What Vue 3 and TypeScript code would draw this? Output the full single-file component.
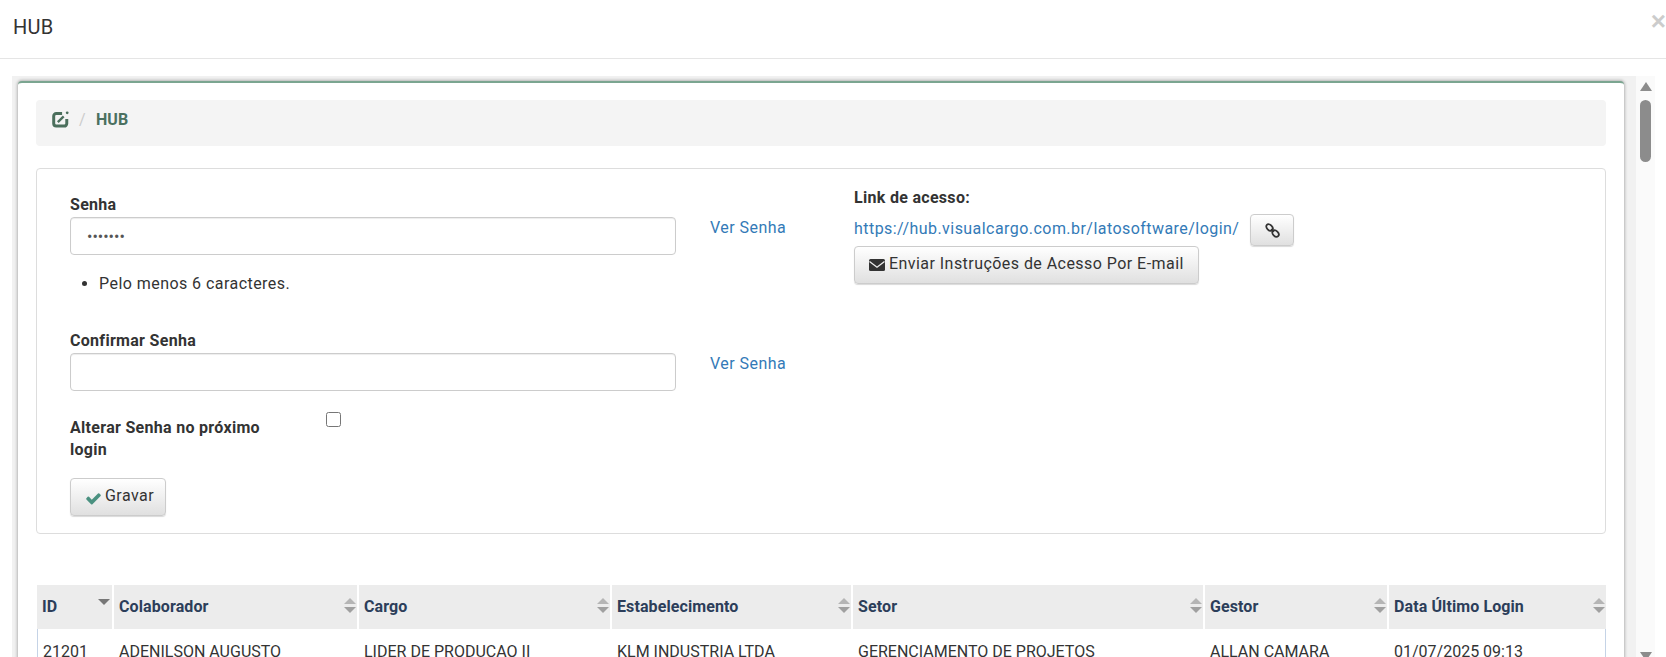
<script setup lang="ts">
const columns = [
  { name: 'ID', value: '21201', active: true },
  { name: 'Colaborador', value: 'ADENILSON AUGUSTO', active: false },
  { name: 'Cargo', value: 'LIDER DE PRODUCAO II', active: false },
  { name: 'Estabelecimento', value: 'KLM INDUSTRIA LTDA', active: false },
  { name: 'Setor', value: 'GERENCIAMENTO DE PROJETOS', active: false },
  { name: 'Gestor', value: 'ALLAN CAMARA', active: false },
  { name: 'Data Último Login', value: '01/07/2025 09:13', active: false },
]
</script>

<template>
  <div class="modal">
    <header class="modal-header">
      <h4 class="modal-title">HUB</h4>
      <span class="close">×</span>
    </header>
    <div class="modal-body">
      <div class="viewport">
        <div class="card">
          <nav class="breadcrumb">
            <svg class="edit-icon" viewBox="0 0 16 16" aria-hidden="true">
              <path fill="none" stroke="currentColor" stroke-width="2.800" d="M9.500 2.400H4a2.400 2.400 0 0 0-2.400 2.400v7A2.400 2.400 0 0 0 4 14.200h7.500a2.400 2.400 0 0 0 2.400-2.400V7.500" />
              <path fill="none" stroke="currentColor" stroke-width="2.200" d="M5.500 10.500L11 5" />
              <circle cx="14.300" cy="1.700" r="1.300" fill="currentColor" />
            </svg>
            <span class="slash">/</span>
            <span class="crumb">HUB</span>
          </nav>

          <section class="panel">
            <div class="form-col">
              <div class="field-row">
                <div class="field">
                  <label class="label">Senha</label>
                  <input class="input" type="password" value="1234567" />
                  <ul class="hints"><li>Pelo menos 6 caracteres.</li></ul>
                </div>
                <a class="link see">Ver Senha</a>
              </div>
              <div class="field-row second">
                <div class="field">
                  <label class="label">Confirmar Senha</label>
                  <input class="input" type="password" />
                </div>
                <a class="link see">Ver Senha</a>
              </div>
              <div class="check-row">
                <label class="label check-label">Alterar Senha no próximo login</label>
                <input class="check" type="checkbox" />
              </div>
              <button class="btn save" type="button">
                <svg class="check-icon" viewBox="0 0 1792 1792" aria-hidden="true"><path fill="currentColor" d="M1671 566q0 40-28 68l-724 724-136 136q-28 28-68 28t-68-28l-136-136-362-362q-28-28-28-68t28-68l136-136q28-28 68-28t68 28l294 295 656-657q28-28 68-28t68 28l136 136q28 28 28 68z"/></svg>
                Gravar
              </button>
            </div>
            <div class="access-col">
              <div class="label access-title">Link de acesso:</div>
              <div class="access-link">
                <a class="link">https://hub.visualcargo.com.br/latosoftware/login/</a>
                <button class="btn copy" type="button" aria-label="Copiar">
                  <svg class="link-icon" viewBox="0 0 16 16" aria-hidden="true">
                    <ellipse cx="4.800" cy="4.800" rx="4" ry="2.800" transform="rotate(45 4.800 4.800)" fill="none" stroke="currentColor" stroke-width="1.900" />
                    <ellipse cx="11.200" cy="11.200" rx="4" ry="2.800" transform="rotate(45 11.200 11.200)" fill="none" stroke="currentColor" stroke-width="1.900" />
                    <path d="M6.500 6.500L9.500 9.500" stroke="currentColor" stroke-width="1.900" />
                  </svg>
                </button>
              </div>
              <button class="btn mail" type="button">
                <svg class="mail-icon" viewBox="0 0 16 12" aria-hidden="true">
                  <rect width="16" height="12" rx="1.500" fill="currentColor" />
                  <path d="M0.500 2.500L8 8.200L15.500 2.500" fill="none" stroke="#eee" stroke-width="1.300" />
                </svg>
                Enviar Instruções de Acesso Por E-mail
              </button>
            </div>
          </section>

          <table class="grid">
            <thead>
              <tr>
                <th v-for="c in columns" :key="c.name">
                  <div class="th-inner">
                    <span>{{ c.name }}</span>
                    <span v-if="c.active" class="sort-active"></span>
                    <span v-else class="sort"></span>
                  </div>
                </th>
              </tr>
            </thead>
            <tbody>
              <tr>
                <td v-for="c in columns" :key="c.name">{{ c.value }}</td>
              </tr>
            </tbody>
          </table>
        </div>
      </div>
      <div class="scrollbar">
        <span class="arrow up"></span>
        <span class="thumb"></span>
        <span class="arrow down"></span>
      </div>
    </div>
  </div>
</template>

<style scoped>
.modal {
  width: 1666px;
  height: 657px;
  overflow: hidden;
  display: flex;
  flex-direction: column;
  background: #fff;
  font-family: Roboto, "Liberation Sans", sans-serif;
  font-size: 16px;
  line-height: 22px;
  letter-spacing: 0.45px;
  color: #333;
}
.modal-header {
  flex: none;
  height: 59px;
  box-sizing: border-box;
  border-bottom: 1px solid #e5e5e5;
  display: flex;
  justify-content: space-between;
  padding: 15px 0 0 13px;
}
.modal-title {
  margin: 0;
  font-size: 20px;
  font-weight: 400;
  line-height: 24px;
  letter-spacing: 0.2px;
  color: #333;
}
.close {
  font-family: "Liberation Sans", sans-serif;
  font-size: 26px;
  font-weight: 700;
  line-height: 14px;
  letter-spacing: 0;
  color: #ccc;
  margin-top: -1px;
}
.modal-body {
  flex: 1;
  min-height: 0;
  display: flex;
  padding: 17px 11px 0 12px;
}
.viewport {
  width: 1624px;
  background: #f1f1f1;
  padding: 5px 12px 0 6px;
  box-sizing: border-box;
  overflow: hidden;
}
.card {
  height: 640px;
  box-sizing: border-box;
  background: #fff;
  border-top: 2px solid #7ba590;
  border-radius: 4px 4px 0 0;
  box-shadow: 0 0 3px 1px rgba(0, 0, 0, 0.25);
  padding: 17px 18px 0 18px;
}
.breadcrumb {
  height: 46px;
  box-sizing: border-box;
  background: #f4f4f4;
  border-radius: 4px;
  display: flex;
  align-items: center;
  padding: 0 16px 6px;
  color: #4b6f5c;
}
.edit-icon {
  width: 17px;
  height: 17px;
  margin-bottom: 2px;
}
.slash {
  color: #ccc;
  margin: 0 10px 0 10px;
}
.crumb {
  font-weight: 700;
  color: #4b7060;
  letter-spacing: 0;
}
.panel {
  margin-top: 22px;
  height: 366px;
  box-sizing: border-box;
  border: 1px solid #ddd;
  border-radius: 4px;
  background: #fff;
  display: flex;
  padding-left: 33px;
}
.form-col {
  width: 784px;
  flex: none;
  padding-top: 24px;
}
.label {
  display: block;
  padding-top: 1px;
  font-weight: 700;
  color: #333;
  letter-spacing: 0.3px;
}
.field-row {
  display: flex;
  align-items: flex-start;
}
.second {
  margin-top: 34px;
}
.field {
  width: 606px;
  flex: none;
}
.input {
  display: block;
  width: 100%;
  height: 38px;
  box-sizing: border-box;
  margin-top: 1px;
  padding: 6px 16px;
  border: 1px solid #ccc;
  border-radius: 4px;
  box-shadow: inset 0 1px 1px rgba(0, 0, 0, 0.075);
  font: inherit;
  letter-spacing: 0;
  color: #555;
  background: #fff;
}
.hints {
  margin: 18px 0 0;
  padding-left: 29px;
}
.link {
  color: #337ab7;
  text-decoration: none;
}
.see {
  margin: 24px 0 0 34px;
}
.access-link .link {
  margin-bottom: 2px;
}
.check-row {
  display: flex;
  align-items: flex-start;
  margin-top: 21px;
}
.check-label {
  width: 226px;
  flex: none;
  margin-top: 4px;
}
.check {
  width: 15px;
  height: 15px;
  margin: 0 0 0 30px;
}
.btn {
  display: inline-flex;
  align-items: center;
  box-sizing: border-box;
  font: inherit;
  letter-spacing: 0.45px;
  color: #333;
  border: 1px solid #ccc;
  border-radius: 4px;
  background: linear-gradient(to bottom, #fff 0%, #e0e0e0 100%);
  box-shadow: 0 1px 1px rgba(0, 0, 0, 0.15);
  padding: 0;
}
.save {
  margin-top: 17px;
  width: 96px;
  height: 38px;
  padding: 0 0 2px 14px;
  gap: 3px;
}
.check-icon {
  width: 17px;
  height: 17px;
  margin-top: 5px;
  color: #4a9180;
}
.access-col {
  padding-top: 17px;
}
.access-link {
  display: flex;
  align-items: center;
  margin-top: 5px;
  height: 32px;
}
.copy {
  width: 44px;
  height: 32px;
  margin-left: 11px;
  justify-content: center;
}
.link-icon {
  width: 15px;
  height: 15px;
}
.mail {
  width: 345px;
  height: 38px;
  padding: 0 0 2px 14px;
  gap: 4px;
}
.mail-icon {
  width: 16px;
  height: 12px;
  margin-top: 2px;
}
.grid {
  margin: 51px 0 0 1px;
  width: 1569px;
  border-collapse: separate;
  border-spacing: 0;
  table-layout: fixed;
}
.grid th {
  height: 44px;
  box-sizing: border-box;
  padding: 0;
  background: #ececec;
  border-right: 2px solid #fff;
  font-weight: 700;
  text-align: left;
  color: #2c3e5a;
  letter-spacing: 0.1px;
}
.grid th:last-child {
  border-right: 0;
}
.grid th:nth-child(1) { width: 77px; }
.grid th:nth-child(2) { width: 245px; }
.grid th:nth-child(3) { width: 253px; }
.grid th:nth-child(4) { width: 241px; }
.grid th:nth-child(5) { width: 352px; }
.grid th:nth-child(6) { width: 184px; }
.th-inner {
  display: flex;
  justify-content: space-between;
  align-items: center;
  padding: 0 1px 0 5px;
}
.sort {
  position: relative;
  width: 12px;
  height: 15px;
  margin-bottom: 3px;
}
.sort::before,
.sort::after {
  content: "";
  position: absolute;
  left: 0;
  border-left: 6px solid transparent;
  border-right: 6px solid transparent;
}
.sort::before {
  top: 0;
  border-bottom: 6px solid #b5b5b5;
}
.sort::after {
  bottom: 0;
  border-top: 6px solid #a0a0a0;
}
.sort-active {
  width: 0;
  height: 0;
  margin: 0 1px 10px 0;
  border-left: 6px solid transparent;
  border-right: 6px solid transparent;
  border-top: 6px solid #777;
}
.grid td {
  height: 44px;
  padding: 2px 0 0 5px;
  box-sizing: border-box;
  white-space: nowrap;
  overflow: hidden;
  color: #333;
  letter-spacing: 0;
}
.grid td:first-child {
  border-left: 1px solid #c5d3e6;
}
.grid td:last-child {
  border-right: 1px solid #c5d3e6;
}
.scrollbar {
  width: 19px;
  background: #fafafa;
  display: flex;
  flex-direction: column;
  align-items: center;
  overflow: hidden;
}
.arrow {
  width: 0;
  height: 0;
  flex: none;
  border-left: 6px solid transparent;
  border-right: 6px solid transparent;
}
.up {
  margin-top: 6px;
  border-bottom: 9px solid #8c8c8c;
}
.thumb {
  flex: none;
  width: 11px;
  height: 62px;
  margin-top: 9px;
  border-radius: 6px;
  background: #8c8c8c;
}
.down {
  margin-top: auto;
  margin-bottom: -4px;
  border-top: 9px solid #8c8c8c;
}
</style>
